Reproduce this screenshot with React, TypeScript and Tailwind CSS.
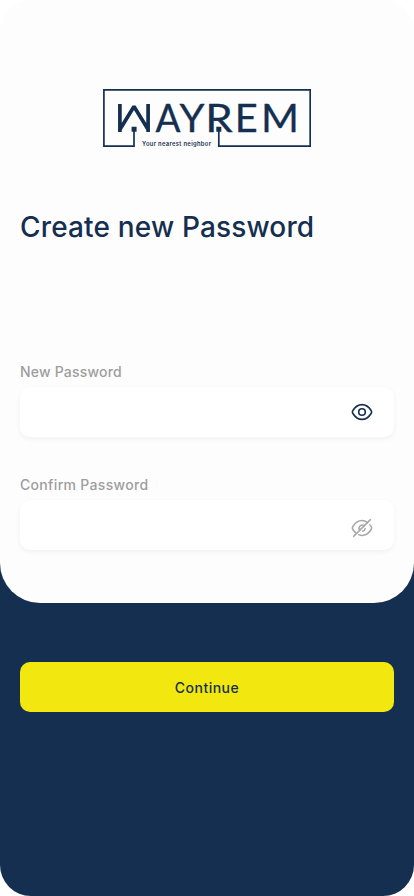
function Logo() {
  return (
    <svg width="208" height="58" viewBox="103 89 208 58" role="img" aria-label="Wayrem" className="mx-auto block">
      <path d="M134 131V146.2H103.9V89.8H310.2V146.2H218.8V131" fill="none" stroke="#152f50" strokeWidth="1.7" />
      <path d="M131.6 126.7h5v5h-5zM216.3 126.7h5v5h-5z" fill="#152f50" />
      <path d="M119.9 104V129.5L134 106.5L148.1 129.5V104M119.9 132V126M148.1 132V126" fill="none" stroke="#152f50" strokeWidth="3.7" strokeLinejoin="bevel" />
      <g fill="#152f50" stroke="#152f50" strokeWidth="0.3" fontFamily="Lato, sans-serif" fontSize="38.5">
        <text x="155.5" y="132" textLength="25" lengthAdjust="spacingAndGlyphs">A</text>
        <text x="179.5" y="132" textLength="25" lengthAdjust="spacingAndGlyphs">Y</text>
        <text x="205.2" y="132" textLength="27.5" lengthAdjust="spacingAndGlyphs">R</text>
        <text x="234.8" y="132" textLength="23" lengthAdjust="spacingAndGlyphs">E</text>
        <text x="261" y="132" textLength="38" lengthAdjust="spacingAndGlyphs">M</text>
      </g>
      <text x="142" y="145.5" fill="#152f50" fontFamily="Inter, sans-serif" fontSize="5.8" fontWeight="600" textLength="69">Your nearest neighbor</text>
    </svg>
  );
}

const iconClass = "h-5 w-[22px]";

function Eye() {
  return (
    <svg className={iconClass} viewBox="0 0 22 20" fill="none" stroke="currentColor" strokeWidth="1.6" strokeLinecap="round" strokeLinejoin="round">
      <path d="M1.9 8.5C4.1 4.9 7.3 2.6 11 2.6s6.900 2.300 9.100 5.900c.6.9.6 2.100 0 3C17.900 15.100 14.700 17.400 11 17.400S4.100 15.100 1.900 11.500c-.6-.9-.6-2.100 0-3Z" />
      <circle cx="11" cy="10" r="3.3" />
    </svg>
  );
}

function EyeOff() {
  return (
    <svg className={iconClass} viewBox="0 0 22 20" fill="none" stroke="currentColor" strokeWidth="1.5" strokeLinecap="round" strokeLinejoin="round">
      <path d="M16.600 4.600C14.900 3.300 13 2.600 11 2.600 7.300 2.600 4.100 4.900 1.900 8.500c-.6.9-.6 2.100 0 3C2.700 12.800 3.700 14 4.800 14.900" />
      <path d="M7.700 16.600C8.800 17.100 9.900 17.400 11 17.400c3.700 0 6.900-2.300 9.100-5.900.6-.9.6-2.100 0-3-.4-.6-.8-1.100-1.200-1.600" />
      <path d="M13.300 7.700A3.300 3.300 0 0 0 8.700 12.300M14.200 10.600A3.300 3.300 0 0 1 11.600 13.200" />
      <path d="M19.400 1.600L2.600 18.400" />
    </svg>
  );
}

type FieldProps = { label: string; hidden?: boolean };

function Field({ label, hidden = false }: FieldProps) {
  return (
    <div>
      <div className={`h-[22px] text-[14px] leading-[22px] font-medium text-[#9d9d9d] ${hidden ? "tracking-[0.32px]" : "tracking-[0.2px]"}`}>{label}</div>
      <div className={`mt-1 flex h-[50px] items-center justify-end rounded-[10px] bg-white pr-[21px] shadow-[0_2px_5px_rgba(0,0,0,0.05)] ${hidden ? "pt-[5px] text-[#a8a8a8]" : "text-[#152f50]"}`}>
        {hidden ? <EyeOff /> : <Eye />}
      </div>
    </div>
  );
}

export default function App() {
  return (
    <div className="bg-white">
      <main className="h-[896px] w-[414px] overflow-hidden rounded-[31px] bg-[linear-gradient(#fdfdfd_50%,#152f50_50%)] font-['Inter','Liberation_Sans',sans-serif]">
        <section className="h-[603px] rounded-b-[40px] bg-[#fdfdfd] px-5 pt-[89px]">
          <Logo />
          <h1 className="mt-[59px] h-[42px] text-[28px] leading-[42px] font-medium tracking-[0.16px] whitespace-nowrap text-[#152f50]">Create new Password</h1>
          <div className="mt-[113px] flex flex-col gap-[37px]">
            <Field label="New Password" />
            <Field label="Confirm Password" hidden />
          </div>
        </section>
        <div className="px-5 pt-[59px]">
          <button className="block h-[50px] w-full rounded-[10px] bg-[#f2e70f] text-[14px] font-medium tracking-[0.5px] text-[#152f50]">Continue</button>
        </div>
      </main>
    </div>
  );
}
